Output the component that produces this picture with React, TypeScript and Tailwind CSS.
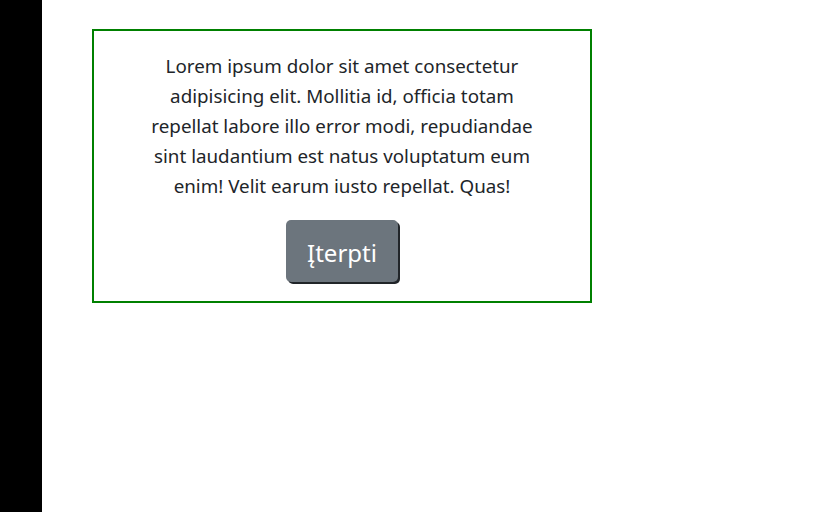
export default function App() {
  return (
    <div className="flex h-[512px] w-[813px] bg-white font-['Segoe_UI','Noto_Sans',sans-serif] text-[#212529]">
      <div className="w-[42px] shrink-0 bg-black" />
      <div className="pl-[50px] pt-[29px]">
        <div className="flex w-[500px] flex-col items-center border-2 border-[#008000] pt-[20px] pb-[19px]">
          <p className="w-[388px] text-center text-[18.8px] leading-[30px]">
            Lorem ipsum dolor sit amet consectetur adipisicing elit. Mollitia id, officia totam repellat labore illo
            error modi, repudiandae sint laudantium est natus voluptatum eum enim! Velit earum iusto repellat. Quas!
          </p>
          <button
            type="button"
            className="mt-[19px] h-[62px] w-[112px] rounded-[5px] bg-[#6c757d] pt-[3px] text-[24px] text-white shadow-[2px_2px_0_#212529]"
          >
            Įterpti
          </button>
        </div>
      </div>
    </div>
  );
}
